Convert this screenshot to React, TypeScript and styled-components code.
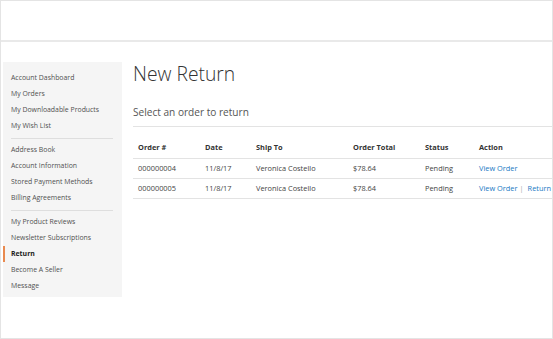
import React from 'react';
import styled, { createGlobalStyle } from 'styled-components';

const GlobalStyle = createGlobalStyle`
  html, body {
    margin: 0;
    padding: 0;
    background: #ffffff;
  }
  * {
    box-sizing: border-box;
  }
`;

const Frame = styled.div`
  width: 553px;
  height: 339px;
  border: 1px solid #e4e4e4;
  overflow: hidden;
  font-family: 'Open Sans', 'Noto Sans', sans-serif;
  color: #333333;
  background: #ffffff;
`;

const Header = styled.div`
  height: 41px;
  border-bottom: 2px solid #e9e9e9;
`;

const Body = styled.div`
  display: flex;
  align-items: flex-start;
  padding: 20px 0 0 2px;
`;

const Sidebar = styled.nav`
  width: 119px;
  flex-shrink: 0;
  background: #f5f5f5;
  padding: 8px 0 3px;
  margin-right: 11px;
`;

const NavItem = styled.div<{ active?: boolean }>`
  height: 16px;
  line-height: 16px;
  font-size: 6.9px;
  padding-left: 6px;
  color: ${(props) => (props.active ? '#222222' : '#505050')};
  font-weight: ${(props) => (props.active ? 700 : 400)};
  border-left: 2px solid ${(props) => (props.active ? '#e98a4f' : 'transparent')};
  white-space: nowrap;
`;

const NavDivider = styled.div`
  height: 8px;
  display: flex;
  align-items: center;
  padding: 0 9px 0 8px;

  &::after {
    content: '';
    flex: 1;
    height: 1px;
    background: #dedede;
  }
`;

const Main = styled.main`
  flex: 1;
  min-width: 0;
`;

const Title = styled.h1`
  margin: 0;
  font-size: 19.3px;
  line-height: 24px;
  font-weight: 300;
  color: #333333;
`;

const SubTitle = styled.div`
  margin-top: 18px;
  font-size: 10.1px;
  line-height: 16px;
  color: #555555;
  padding-bottom: 6px;
  border-bottom: 1px solid #e3e3e3;
`;

const Table = styled.table`
  margin-top: 10px;
  width: 428px;
  border-collapse: collapse;
  font-size: 7.4px;
  color: #444444;
`;

const Th = styled.th<{ w: number }>`
  width: ${(props) => props.w}px;
  text-align: left;
  font-weight: 700;
  color: #333333;
  height: 21px;
  padding: 0 0 0 5px;
  border-bottom: 1px solid #e3e3e3;
`;

const Td = styled.td`
  height: 20px;
  padding: 0 0 0 5px;
  border-bottom: 1px solid #e3e3e3;
  white-space: nowrap;
`;

const ActionLink = styled.span`
  color: #1979c3;
`;

const Separator = styled.span`
  display: inline-block;
  color: #a6a6a6;
  margin: 0 4px 0 2px;
`;

const nav: (string | null)[] = [
  'Account Dashboard',
  'My Orders',
  'My Downloadable Products',
  'My Wish List',
  null,
  'Address Book',
  'Account Information',
  'Stored Payment Methods',
  'Billing Agreements',
  null,
  'My Product Reviews',
  'Newsletter Subscriptions',
  'Return',
  'Become A Seller',
  'Message',
];

const orders = [
  { id: '000000004', date: '11/8/17', to: 'Veronica Costello', total: '$78.64', status: 'Pending', canReturn: false },
  { id: '000000005', date: '11/8/17', to: 'Veronica Costello', total: '$78.64', status: 'Pending', canReturn: true },
];

const App = () => {
  return (
    <>
      <GlobalStyle />
      <Frame>
        <Header />
        <Body>
          <Sidebar>
            {nav.map((item, index) =>
              item ? (
                <NavItem key={item} active={item === 'Return'}>
                  {item}
                </NavItem>
              ) : (
                <NavDivider key={'d' + index} />
              )
            )}
          </Sidebar>
          <Main>
            <Title>New Return</Title>
            <SubTitle>Select an order to return</SubTitle>
            <Table>
              <thead>
                <tr>
                  <Th w={67}>Order #</Th>
                  <Th w={51}>Date</Th>
                  <Th w={97}>Ship To</Th>
                  <Th w={72}>Order Total</Th>
                  <Th w={54}>Status</Th>
                  <Th w={87}>Action</Th>
                </tr>
              </thead>
              <tbody>
                {orders.map((order) => (
                  <tr key={order.id}>
                    <Td>{order.id}</Td>
                    <Td>{order.date}</Td>
                    <Td>{order.to}</Td>
                    <Td>{order.total}</Td>
                    <Td>{order.status}</Td>
                    <Td>
                      <ActionLink>View Order</ActionLink>
                      {order.canReturn && (
                        <>
                          <Separator>|</Separator>
                          <ActionLink>Return</ActionLink>
                        </>
                      )}
                    </Td>
                  </tr>
                ))}
              </tbody>
            </Table>
          </Main>
        </Body>
      </Frame>
    </>
  );
};

export default App;
